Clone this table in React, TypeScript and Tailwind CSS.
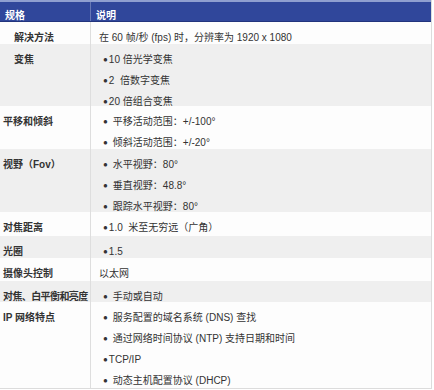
import React from "react";

type Line = { b?: boolean; gap?: number; t: string };
type Row = { h: number; grey: boolean; label: string; indent?: boolean; tight?: boolean; lines: Line[] };

const rows: Row[] = [
  { h: 22, grey: false, label: "解决方法", indent: true, lines: [{ t: "在 60 帧/秒 (fps) 时，分辨率为 1920 x 1080" }] },
  {
    h: 62, grey: true, label: "变焦", indent: true,
    lines: [
      { b: true, gap: 1, t: "10 倍光学变焦" },
      { b: true, gap: 1, t: "2  倍数字变焦" },
      { b: true, gap: 1, t: "20 倍组合变焦" },
    ],
  },
  {
    h: 43, grey: false, label: "平移和倾斜",
    lines: [
      { b: true, gap: 5, t: "平移活动范围：+/-100°" },
      { b: true, gap: 5, t: "倾斜活动范围：+/-20°" },
    ],
  },
  {
    h: 63, grey: true, label: "视野（Fov）",
    lines: [
      { b: true, gap: 5, t: "水平视野：80°" },
      { b: true, gap: 5, t: "垂直视野：48.8°" },
      { b: true, gap: 5, t: "跟踪水平视野：80°" },
    ],
  },
  { h: 24, grey: false, label: "对焦距离", lines: [{ b: true, gap: 1, t: "1.0  米至无穷远（广角）" }] },
  { h: 22, grey: true, label: "光圈", lines: [{ b: true, gap: 1, t: "1.5" }] },
  { h: 23, grey: false, label: "摄像头控制", lines: [{ t: "以太网" }] },
  { h: 21, grey: true, label: "对焦、白平衡和亮度", tight: true, lines: [{ b: true, gap: 5, t: "手动或自动" }] },
  {
    h: 86, grey: false, label: "IP  网络特点",
    lines: [
      { b: true, gap: 5, t: "服务配置的域名系统 (DNS) 查找" },
      { b: true, gap: 5, t: "通过网络时间协议 (NTP) 支持日期和时间" },
      { b: true, gap: 1, t: "TCP/IP" },
      { b: true, gap: 5, t: "动态主机配置协议 (DHCP)" },
    ],
  },
];

export default function App() {
  return (
    <div
      className="w-[434px] h-[390px] bg-white overflow-hidden"
      style={{ fontFamily: '"Liberation Sans", Arial, "Noto Sans CJK SC", sans-serif' }}
    >
      <div className="w-[432px] border-r border-b border-[#dcdcdc]">
        <div className="flex h-[22px] bg-[#30479b] border-t-2 border-t-[#8f9fd0] border-b border-b-[#22347d] text-white font-bold text-[10px]">
          <div className="w-[91px] border-r border-[#6677b5] pl-[5px] pt-[8px] leading-[12px]">规格</div>
          <div className="flex-1 pl-[5px] pt-[8px] leading-[12px]">说明</div>
        </div>
        {rows.map((r, i) => (
          <div
            key={i}
            className={`flex text-[10px] text-[#333] ${r.grey ? "bg-[#efefef]" : "bg-[#fdfdfd]"}`}
            style={{ height: r.h }}
          >
            <div
              className={`w-[91px] shrink-0 border-r border-[#dedede] font-bold pt-[5px] leading-[21px] whitespace-nowrap ${r.indent ? "pl-[14px]" : "pl-[3px]"} ${r.tight ? "tracking-[-0.6px]" : ""}`}
            >
              {r.label}
            </div>
            <div className="flex-1 pt-[5px] leading-[21px] whitespace-pre">
              {r.lines.map((l, j) => (
                <div key={j} className={l.b ? "pl-[12px] flex" : "pl-[8px]"}>
                  {l.b && <span className="text-[8px]" style={{ marginRight: l.gap }}>●</span>}
                  <span>{l.t}</span>
                </div>
              ))}
            </div>
          </div>
        ))}
      </div>
    </div>
  );
}
